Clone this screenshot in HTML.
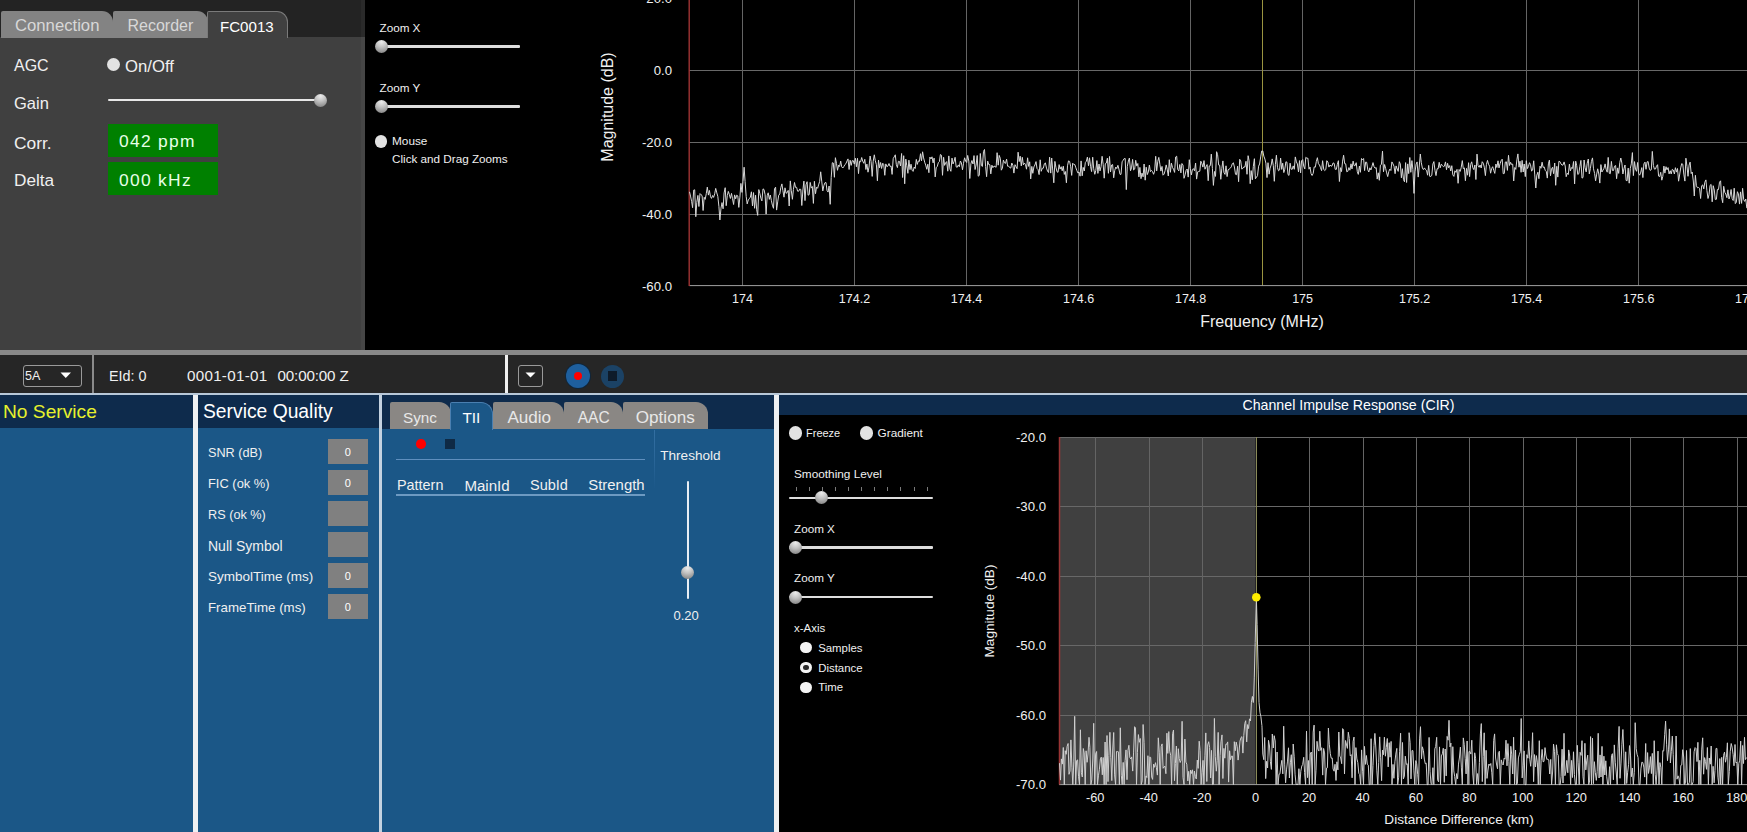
<!DOCTYPE html>
<html><head><meta charset="utf-8">
<style>
*{margin:0;padding:0;box-sizing:border-box}
html,body{width:1747px;height:832px;overflow:hidden;background:#000;font-family:"Liberation Sans",sans-serif;color:#f0f0f0}
.a{position:absolute;white-space:nowrap;line-height:1}
.r{position:absolute}
.tab{position:absolute;border-radius:2px 11px 0 0}
.thumb{position:absolute;border-radius:50%;background:radial-gradient(circle at 50% 15%,#ececec 0%,#c4c4c4 40%,#8a8a8a 85%,#6a6a6a 100%)}
.track{position:absolute;background:#d8d8d8;border-radius:1px}
.radio{position:absolute;border-radius:50%;background:#e2e2e2}
.ch{font-family:"Liberation Sans",sans-serif;fill:#f0f0f0}
</style></head><body>
<div class="r" style="left:0px;top:0px;width:365px;height:37px;background:#232323;"></div>
<div class="r" style="left:0px;top:37px;width:365px;height:313px;background:#404040;"></div>
<div class="r" style="left:361px;top:0px;width:4px;height:350px;background:rgba(255,255,255,0.035);"></div>
<div class="tab" style="left:1px;top:11px;width:112px;height:27px;background:#838383"></div>
<div class="a" style="left:15.0px;top:17.6px;font-size:16.7px;color:#d8d8d8;">Connection</div>
<div class="tab" style="left:113px;top:11px;width:95px;height:27px;background:#838383"></div>
<div class="a" style="left:127.5px;top:18.2px;font-size:16px;color:#d8d8d8;">Recorder</div>
<div class="tab" style="left:207px;top:11px;width:81px;height:27px;background:#404040;border:1px solid #7a7a7a;border-bottom:none"></div>
<div class="a" style="left:220.0px;top:18.9px;font-size:15.1px;color:#ffffff;">FC0013</div>
<div class="a" style="left:14.0px;top:57.8px;font-size:16px;color:#f0f0f0;">AGC</div>
<div class="radio" style="left:107.1px;top:57.89999999999999px;width:13.4px;height:13.4px;background:#e2e2e2;"></div>
<div class="a" style="left:125.0px;top:58.7px;font-size:16.7px;color:#f0f0f0;">On/Off</div>
<div class="a" style="left:14.0px;top:95.0px;font-size:16.5px;color:#f0f0f0;">Gain</div>
<div class="track" style="left:108px;top:98.75px;width:212px;height:2.5px;background:#e8e8e8"></div>
<div class="thumb" style="left:314.0px;top:93.5px;width:13.0px;height:13.0px"></div>
<div class="a" style="left:14.0px;top:134.5px;font-size:17.4px;color:#f0f0f0;">Corr.</div>
<div class="r" style="left:108px;top:124px;width:110px;height:33px;background:#008000;"></div>
<div class="a" style="left:119.0px;top:133.2px;font-size:17.4px;color:#e8ffe8;letter-spacing:1.3px">042&nbsp;ppm</div>
<div class="a" style="left:14.0px;top:172.1px;font-size:17.2px;color:#f0f0f0;">Delta</div>
<div class="r" style="left:108px;top:162px;width:110px;height:33px;background:#008000;"></div>
<div class="a" style="left:119.0px;top:172.0px;font-size:17.4px;color:#e8ffe8;letter-spacing:1.3px">000&nbsp;kHz</div>
<div class="a" style="left:379.5px;top:22.1px;font-size:11.7px;color:#f0f0f0;">Zoom X</div>
<div class="track" style="left:380px;top:45.3px;width:139.5px;height:2.4px;background:#dedede"></div>
<div class="thumb" style="left:375.0px;top:40.0px;width:13.0px;height:13.0px"></div>
<div class="a" style="left:379.5px;top:81.7px;font-size:11.7px;color:#f0f0f0;">Zoom Y</div>
<div class="track" style="left:380px;top:105.2px;width:139.5px;height:2.4px;background:#dedede"></div>
<div class="thumb" style="left:375.1px;top:99.9px;width:13.0px;height:13.0px"></div>
<div class="radio" style="left:374.9px;top:135.2px;width:12.6px;height:12.6px;background:#e2e2e2;"></div>
<div class="a" style="left:392.0px;top:136.3px;font-size:11.8px;color:#f0f0f0;">Mouse</div>
<div class="a" style="left:392.0px;top:152.7px;font-size:11.7px;color:#f0f0f0;">Click and Drag Zooms</div>
<div class="r" style="left:0px;top:350px;width:1747px;height:5px;background:#898989;"></div>
<div class="r" style="left:0px;top:355px;width:1747px;height:38px;background:#262626;"></div>
<div class="r" style="left:23px;top:365px;width:59px;height:22px;border:1px solid #9a9a9a;border-radius:3px"></div>
<div class="a" style="left:25.0px;top:370.4px;font-size:12.5px;color:#f0f0f0;">5A</div>
<svg class="r" style="left:60px;top:372px" width="12" height="7"><path d="M0.5 0.5 L11 0.5 L5.75 6 Z" fill="#ffffff"/></svg>
<div class="r" style="left:92px;top:355px;width:2px;height:38px;background:#8a8a8a;"></div>
<div class="a" style="left:109.0px;top:368.8px;font-size:14.4px;color:#f0f0f0;">EId: 0</div>
<div class="a" style="left:187.0px;top:368.1px;font-size:15.2px;color:#f0f0f0;letter-spacing:0.27px">0001-01-01</div>
<div class="a" style="left:277.5px;top:368.1px;font-size:15.2px;color:#f0f0f0;letter-spacing:-0.15px">00:00:00 Z</div>
<div class="r" style="left:505px;top:355px;width:3px;height:39px;background:#f0f0f0;"></div>
<div class="r" style="left:518px;top:365px;width:25px;height:22px;border:1px solid #9a9a9a;border-radius:3px"></div>
<svg class="r" style="left:525px;top:372px" width="12" height="7"><path d="M0.5 0.5 L10.5 0.5 L5.5 5.5 Z" fill="#ffffff"/></svg>
<div class="r" style="left:566px;top:364px;width:24px;height:24px;border-radius:50%;background:#1e5f9e;box-shadow:0 0 0 1px #10263a"></div>
<div class="r" style="left:573.5px;top:371.7px;width:8.6px;height:8.6px;border-radius:50%;background:#ff0000"></div>
<div class="r" style="left:601px;top:364.5px;width:23px;height:23px;border-radius:50%;background:#1b4265"></div>
<div class="r" style="left:608px;top:371px;width:9px;height:10px;background:#0e1b2a;"></div>
<div class="r" style="left:0px;top:393px;width:1747px;height:2px;background:#b8c8d8;"></div>
<div class="r" style="left:0px;top:395px;width:193px;height:33px;background:#0e2b4c;"></div>
<div class="r" style="left:0px;top:428px;width:193px;height:404px;background:#1b5787;"></div>
<div class="a" style="left:3.0px;top:401.7px;font-size:19.2px;color:#e6f02c;">No Service</div>
<div class="r" style="left:193px;top:395px;width:5px;height:437px;background:#eef0f2;"></div>
<div class="r" style="left:198px;top:395px;width:181px;height:33px;background:#0e2b4c;"></div>
<div class="r" style="left:198px;top:428px;width:181px;height:404px;background:#1b5787;"></div>
<div class="a" style="left:203.0px;top:401.7px;font-size:19.3px;color:#ffffff;">Service Quality</div>
<div class="a" style="left:208.0px;top:446.9px;font-size:12.7px;color:#f0f0f0;">SNR (dB)</div>
<div class="r" style="left:328px;top:439px;width:40px;height:25px;background:#808080;"></div>
<div class="a" style="left:-152.3px;width:1000px;text-align:center;top:447.2px;font-size:11px;color:#ffffff;">0</div>
<div class="a" style="left:208.0px;top:477.8px;font-size:12.9px;color:#f0f0f0;">FIC (ok %)</div>
<div class="r" style="left:328px;top:470px;width:40px;height:25px;background:#808080;"></div>
<div class="a" style="left:-152.3px;width:1000px;text-align:center;top:478.2px;font-size:11px;color:#ffffff;">0</div>
<div class="a" style="left:208.0px;top:508.9px;font-size:12.7px;color:#f0f0f0;">RS (ok %)</div>
<div class="r" style="left:328px;top:501px;width:40px;height:25px;background:#808080;"></div>
<div class="a" style="left:208.0px;top:538.8px;font-size:14.0px;color:#f0f0f0;">Null Symbol</div>
<div class="r" style="left:328px;top:532px;width:40px;height:25px;background:#808080;"></div>
<div class="a" style="left:208.0px;top:570.3px;font-size:13.5px;color:#f0f0f0;">SymbolTime (ms)</div>
<div class="r" style="left:328px;top:563px;width:40px;height:25px;background:#808080;"></div>
<div class="a" style="left:-152.3px;width:1000px;text-align:center;top:571.2px;font-size:11px;color:#ffffff;">0</div>
<div class="a" style="left:208.0px;top:601.4px;font-size:13.3px;color:#f0f0f0;">FrameTime (ms)</div>
<div class="r" style="left:328px;top:594px;width:40px;height:25px;background:#808080;"></div>
<div class="a" style="left:-152.3px;width:1000px;text-align:center;top:602.2px;font-size:11px;color:#ffffff;">0</div>
<div class="r" style="left:379px;top:395px;width:3px;height:437px;background:#c4d2e0;"></div>
<div class="r" style="left:382px;top:395px;width:392px;height:34px;background:#0e2b4c;"></div>
<div class="r" style="left:382px;top:429px;width:392px;height:403px;background:#1b5787;"></div>
<div class="tab" style="left:390px;top:402px;width:61px;height:27px;background:#8a8784;border-radius:2px 12px 0 0"></div>
<div class="a" style="left:403.0px;top:410.0px;font-size:15.3px;color:#e8e8e8;">Sync</div>
<div class="tab" style="left:493px;top:402px;width:71px;height:27px;background:#8a8784;border-radius:2px 12px 0 0"></div>
<div class="a" style="left:507.4px;top:408.5px;font-size:17.1px;color:#e8e8e8;">Audio</div>
<div class="tab" style="left:564px;top:402px;width:59px;height:27px;background:#8a8784;border-radius:2px 12px 0 0"></div>
<div class="a" style="left:577.7px;top:409.8px;font-size:15.6px;color:#e8e8e8;">AAC</div>
<div class="tab" style="left:623px;top:402px;width:85px;height:27px;background:#8a8784;border-radius:2px 12px 0 0"></div>
<div class="a" style="left:635.8px;top:408.5px;font-size:17.1px;color:#e8e8e8;">Options</div>
<div class="tab" style="left:450px;top:402px;width:43px;height:28px;background:#1b5787;border:1px solid #4a7fb0;border-bottom:none;border-radius:2px 12px 0 0"></div>
<div class="a" style="left:462.4px;top:410.0px;font-size:15.4px;color:#ffffff;">TII</div>
<div class="radio" style="left:416.3px;top:439.3px;width:9.4px;height:9.4px;background:#ff0000;"></div>
<div class="r" style="left:445px;top:439px;width:10px;height:10px;background:#0f2a45;"></div>
<div class="r" style="left:396px;top:458.5px;width:249px;height:1.5px;background:#5f8fbe;"></div>
<div class="r" style="left:654px;top:430px;width:1px;height:60px;background:linear-gradient(#336fa2,#2a6698 50%,#1b5787)"></div>
<div class="a" style="left:660.2px;top:449.2px;font-size:13.6px;color:#f0f0f0;">Threshold</div>
<div class="a" style="left:397.0px;top:478.2px;font-size:14.4px;color:#f0f0f0;">Pattern</div>
<div class="a" style="left:464.4px;top:477.6px;font-size:15.1px;color:#f0f0f0;">MainId</div>
<div class="a" style="left:530.0px;top:478.1px;font-size:14.5px;color:#f0f0f0;">SubId</div>
<div class="a" style="left:588.3px;top:477.8px;font-size:14.9px;color:#f0f0f0;">Strength</div>
<div class="r" style="left:396px;top:494px;width:249px;height:1.5px;background:#6d9ac2;"></div>
<div class="track" style="left:686.5px;top:480.5px;width:2.2px;height:118px;background:#e8eef4"></div>
<div class="thumb" style="left:681.1px;top:566.0px;width:13.0px;height:13.0px"></div>
<div class="a" style="left:186.1px;width:1000px;text-align:center;top:608.7px;font-size:13px;color:#f0f0f0;">0.20</div>
<div class="r" style="left:774px;top:395px;width:5px;height:437px;background:#eef0f2;"></div>
<div class="r" style="left:779px;top:395px;width:968px;height:20px;background:#0e2b4c;"></div>
<div class="r" style="left:779px;top:415px;width:968px;height:417px;background:#000000;"></div>
<div class="a" style="left:848.5px;width:1000px;text-align:center;top:398.0px;font-size:14.2px;color:#ffffff;">Channel Impulse Response (CIR)</div>
<div class="radio" style="left:788.6999999999999px;top:426.4px;width:13.2px;height:13.2px;background:#e2e2e2;"></div>
<div class="a" style="left:806.0px;top:428.4px;font-size:11px;color:#f0f0f0;">Freeze</div>
<div class="radio" style="left:860.0px;top:426.4px;width:13.2px;height:13.2px;background:#e2e2e2;"></div>
<div class="a" style="left:877.6px;top:427.7px;font-size:11.8px;color:#f0f0f0;">Gradient</div>
<div class="a" style="left:794.0px;top:468.6px;font-size:11.8px;color:#f0f0f0;">Smoothing Level</div>
<div class="r" style="left:795.5px;top:487px;width:1px;height:3.6px;background:#7a7a7a;"></div>
<div class="r" style="left:808.62px;top:487px;width:1px;height:3.6px;background:#7a7a7a;"></div>
<div class="r" style="left:821.74px;top:487px;width:1px;height:3.6px;background:#7a7a7a;"></div>
<div class="r" style="left:834.86px;top:487px;width:1px;height:3.6px;background:#7a7a7a;"></div>
<div class="r" style="left:847.98px;top:487px;width:1px;height:3.6px;background:#7a7a7a;"></div>
<div class="r" style="left:861.1px;top:487px;width:1px;height:3.6px;background:#7a7a7a;"></div>
<div class="r" style="left:874.22px;top:487px;width:1px;height:3.6px;background:#7a7a7a;"></div>
<div class="r" style="left:887.34px;top:487px;width:1px;height:3.6px;background:#7a7a7a;"></div>
<div class="r" style="left:900.46px;top:487px;width:1px;height:3.6px;background:#7a7a7a;"></div>
<div class="r" style="left:913.58px;top:487px;width:1px;height:3.6px;background:#7a7a7a;"></div>
<div class="r" style="left:926.7px;top:487px;width:1px;height:3.6px;background:#7a7a7a;"></div>
<div class="track" style="left:789px;top:496.6px;width:144.29999999999995px;height:2.4px;background:#dedede"></div>
<div class="thumb" style="left:815.3px;top:491.3px;width:13.0px;height:13.0px"></div>
<div class="a" style="left:794.0px;top:522.7px;font-size:11.7px;color:#f0f0f0;">Zoom X</div>
<div class="track" style="left:789px;top:546.1999999999999px;width:144.29999999999995px;height:2.4px;background:#dedede"></div>
<div class="thumb" style="left:789.2px;top:540.9px;width:13.0px;height:13.0px"></div>
<div class="a" style="left:794.0px;top:572.4px;font-size:11.7px;color:#f0f0f0;">Zoom Y</div>
<div class="track" style="left:789px;top:595.8px;width:144.29999999999995px;height:2.4px;background:#dedede"></div>
<div class="thumb" style="left:789.3px;top:590.5px;width:13.0px;height:13.0px"></div>
<div class="a" style="left:794.0px;top:622.9px;font-size:11.5px;color:#f0f0f0;">x-Axis</div>
<div class="radio" style="left:800.4px;top:642.1px;width:11.2px;height:11.2px;background:#f4f4f4;"></div>
<div class="a" style="left:818.2px;top:642.6px;font-size:11.4px;color:#f0f0f0;">Samples</div>
<div class="radio" style="left:800.4px;top:662.0px;width:11.2px;height:11.2px;background:#f4f4f4;"></div>
<div class="radio" style="left:803.4px;top:665.0px;width:5.2px;height:5.2px;background:#2a2a2a;"></div>
<div class="a" style="left:818.2px;top:662.5px;font-size:11.4px;color:#f0f0f0;">Distance</div>
<div class="radio" style="left:800.4px;top:681.9px;width:11.2px;height:11.2px;background:#f4f4f4;"></div>
<div class="a" style="left:818.2px;top:682.4px;font-size:11.4px;color:#f0f0f0;">Time</div>
<svg class="r" style="left:0;top:0" width="1747" height="832">
<line x1="689" y1="-1.5" x2="1747" y2="-1.5" stroke="#686868" stroke-width="1"/>
<line x1="689" y1="70.5" x2="1747" y2="70.5" stroke="#686868" stroke-width="1"/>
<line x1="689" y1="142.5" x2="1747" y2="142.5" stroke="#686868" stroke-width="1"/>
<line x1="689" y1="214.5" x2="1747" y2="214.5" stroke="#686868" stroke-width="1"/>
<line x1="742.5" y1="0" x2="742.5" y2="286" stroke="#646464" stroke-width="1"/>
<line x1="854.5" y1="0" x2="854.5" y2="286" stroke="#646464" stroke-width="1"/>
<line x1="966.5" y1="0" x2="966.5" y2="286" stroke="#646464" stroke-width="1"/>
<line x1="1078.5" y1="0" x2="1078.5" y2="286" stroke="#646464" stroke-width="1"/>
<line x1="1190.5" y1="0" x2="1190.5" y2="286" stroke="#646464" stroke-width="1"/>
<line x1="1302.5" y1="0" x2="1302.5" y2="286" stroke="#646464" stroke-width="1"/>
<line x1="1414.5" y1="0" x2="1414.5" y2="286" stroke="#646464" stroke-width="1"/>
<line x1="1526.5" y1="0" x2="1526.5" y2="286" stroke="#646464" stroke-width="1"/>
<line x1="1638.5" y1="0" x2="1638.5" y2="286" stroke="#646464" stroke-width="1"/>
<line x1="1750.5" y1="0" x2="1750.5" y2="286" stroke="#646464" stroke-width="1"/>
<line x1="1262.5" y1="0" x2="1262.5" y2="286" stroke="#9a9440" stroke-width="1"/>
<line x1="689" y1="285.6" x2="1747" y2="285.6" stroke="#a0a0a0" stroke-width="1"/>
<line x1="689.2" y1="0" x2="689.2" y2="286" stroke="#a03434" stroke-width="1.4"/>
<polyline fill="none" stroke="#d8d8d8" stroke-width="1" stroke-linejoin="round" points="689.5,191.8 690.5,196.1 691.6,201.3 692.6,207.7 693.7,190.1 694.7,189.8 695.8,216.7 696.8,202.4 697.9,195.4 698.9,206.5 700.0,193.6 701.0,194.7 702.1,195.6 703.1,210.5 704.2,197.3 705.2,199.4 706.3,193.5 707.3,187.1 708.4,195.1 709.4,190.4 710.5,196.6 711.5,198.4 712.6,195.5 713.6,197.4 714.7,193.8 715.7,188.4 716.8,192.9 717.8,196.3 718.9,206.3 719.9,220.0 721.0,208.1 722.0,202.6 723.1,208.8 724.1,192.9 725.2,187.7 726.2,205.7 727.3,195.6 728.3,191.4 729.4,194.7 730.4,198.5 731.5,193.4 732.5,198.7 733.6,204.5 734.6,194.9 735.7,198.8 736.7,195.2 737.8,195.9 738.8,207.4 739.9,197.2 740.9,183.4 742.0,192.4 743.0,181.6 744.1,167.2 745.1,181.6 746.2,196.5 747.2,203.9 748.3,199.9 749.3,198.7 750.4,197.1 751.4,191.8 752.5,206.0 753.5,192.6 754.6,208.3 755.6,195.2 756.7,209.8 757.7,215.4 758.8,189.6 759.8,193.3 760.9,198.3 761.9,200.9 763.0,188.9 764.0,189.5 765.1,194.8 766.1,214.1 767.2,195.7 768.2,192.8 769.3,199.4 770.3,195.0 771.4,200.7 772.4,205.2 773.5,208.3 774.5,188.7 775.6,187.2 776.6,210.1 777.7,201.9 778.7,195.2 779.8,194.0 780.8,187.6 781.9,183.9 782.9,190.6 784.0,197.2 785.0,187.8 786.1,193.3 787.1,192.7 788.2,190.4 789.2,206.0 790.3,180.9 791.3,190.6 792.4,199.3 793.4,189.5 794.5,182.5 795.5,187.4 796.6,187.3 797.6,191.2 798.7,191.2 799.7,189.1 800.8,189.4 801.8,205.5 802.9,190.0 803.9,181.1 805.0,200.6 806.0,184.8 807.1,181.7 808.1,195.2 809.2,194.6 810.2,182.4 811.3,188.1 812.3,186.5 813.4,203.4 814.4,181.3 815.5,193.7 816.5,187.2 817.6,188.3 818.6,184.9 819.7,181.3 820.7,171.8 821.8,181.9 822.8,190.9 823.9,185.5 824.9,182.8 826.0,182.5 827.0,190.5 828.1,192.1 829.1,186.0 830.2,204.3 831.2,177.7 832.3,162.7 833.3,163.0 834.4,177.3 835.4,157.7 836.5,163.5 837.5,170.3 838.6,165.1 839.6,166.5 840.7,161.1 841.7,166.8 842.8,168.0 843.8,166.6 844.9,164.6 845.9,163.7 847.0,161.0 848.0,158.9 849.1,169.5 850.1,160.2 851.2,165.4 852.2,160.7 853.3,160.7 854.3,164.1 855.4,158.2 856.4,166.8 857.5,158.3 858.5,173.6 859.6,161.1 860.6,161.9 861.7,157.5 862.7,161.2 863.8,163.3 864.8,159.3 865.9,169.5 866.9,164.1 868.0,172.2 869.0,167.1 870.1,156.0 871.1,161.4 872.2,176.4 873.2,161.2 874.3,154.8 875.3,160.7 876.4,164.7 877.4,180.8 878.5,160.1 879.5,167.9 880.6,162.5 881.6,168.5 882.7,163.2 883.7,164.2 884.8,175.3 885.8,163.9 886.9,166.7 887.9,166.1 889.0,163.5 890.0,166.4 891.1,166.1 892.1,174.4 893.2,158.6 894.2,156.9 895.3,154.8 896.3,164.4 897.4,167.6 898.4,161.3 899.5,161.5 900.5,166.0 901.6,153.5 902.6,177.5 903.7,155.7 904.7,183.8 905.8,159.1 906.8,165.7 907.9,173.3 908.9,160.2 910.0,169.6 911.0,164.2 912.1,170.2 913.1,171.4 914.2,167.0 915.2,168.5 916.3,159.4 917.3,164.4 918.4,160.9 919.4,161.4 920.5,153.7 921.5,160.9 922.6,151.8 923.6,157.9 924.7,162.3 925.7,165.1 926.8,169.3 927.8,164.2 928.9,172.7 929.9,157.1 931.0,159.0 932.0,156.8 933.1,162.9 934.1,158.1 935.2,176.9 936.2,167.7 937.3,166.4 938.3,162.7 939.4,161.6 940.4,154.5 941.5,155.3 942.5,175.3 943.6,157.3 944.6,165.4 945.7,162.7 946.7,161.6 947.8,171.2 948.8,155.9 949.9,168.9 950.9,171.3 952.0,158.1 953.0,164.0 954.1,161.4 955.1,157.3 956.2,166.9 957.2,167.3 958.3,164.9 959.3,166.8 960.4,161.0 961.4,162.8 962.5,169.8 963.5,163.3 964.6,157.8 965.6,161.0 966.7,162.5 967.7,155.4 968.8,161.1 969.8,178.5 970.9,163.8 971.9,160.5 973.0,164.0 974.0,155.6 975.1,169.5 976.1,165.0 977.2,155.5 978.2,176.2 979.3,175.4 980.3,153.5 981.4,165.6 982.4,166.5 983.5,151.4 984.5,149.5 985.6,166.5 986.6,176.7 987.7,161.1 988.7,164.5 989.8,164.6 990.8,173.9 991.9,165.2 992.9,167.7 994.0,166.1 995.0,166.5 996.1,167.3 997.1,152.7 998.2,165.2 999.2,155.4 1000.3,158.3 1001.3,170.2 1002.4,168.1 1003.4,160.1 1004.5,162.9 1005.5,163.4 1006.6,159.1 1007.6,166.2 1008.7,166.1 1009.7,167.6 1010.8,168.1 1011.8,163.0 1012.9,165.5 1013.9,173.1 1015.0,164.7 1016.0,166.7 1017.1,168.7 1018.1,152.2 1019.2,161.6 1020.2,156.2 1021.3,165.9 1022.3,157.3 1023.4,164.9 1024.4,163.0 1025.5,164.6 1026.5,169.2 1027.6,157.8 1028.6,166.4 1029.7,161.8 1030.7,178.9 1031.8,166.4 1032.8,173.3 1033.9,166.9 1034.9,165.0 1036.0,161.6 1037.0,168.5 1038.1,169.6 1039.1,174.6 1040.2,159.8 1041.2,171.3 1042.3,168.3 1043.3,168.2 1044.4,163.7 1045.4,162.9 1046.5,168.1 1047.5,171.0 1048.6,172.5 1049.6,157.2 1050.7,173.1 1051.7,158.0 1052.8,170.9 1053.8,182.8 1054.9,161.4 1055.9,167.3 1057.0,171.8 1058.0,172.3 1059.1,164.6 1060.1,169.1 1061.2,166.7 1062.2,170.8 1063.3,166.2 1064.3,174.4 1065.4,171.5 1066.4,182.8 1067.5,165.8 1068.5,160.9 1069.6,161.4 1070.6,166.2 1071.7,175.4 1072.7,163.2 1073.8,164.5 1074.8,164.6 1075.9,167.8 1076.9,170.7 1078.0,173.1 1079.0,172.0 1080.1,176.2 1081.1,160.9 1082.2,175.8 1083.2,167.4 1084.3,171.0 1085.3,162.6 1086.4,161.2 1087.4,157.1 1088.5,165.8 1089.5,157.8 1090.6,166.7 1091.6,171.6 1092.7,157.2 1093.7,168.8 1094.8,174.3 1095.8,170.5 1096.9,160.6 1097.9,173.4 1099.0,164.0 1100.0,170.9 1101.1,166.5 1102.1,156.3 1103.2,164.6 1104.2,178.2 1105.3,163.7 1106.3,163.1 1107.4,158.1 1108.4,173.3 1109.5,156.5 1110.5,172.0 1111.6,165.0 1112.6,164.5 1113.7,177.8 1114.7,170.5 1115.8,167.0 1116.8,168.6 1117.9,165.3 1118.9,169.0 1120.0,174.3 1121.0,174.4 1122.1,161.8 1123.1,160.3 1124.2,158.6 1125.2,158.5 1126.3,189.6 1127.3,166.4 1128.4,161.0 1129.4,158.0 1130.5,170.8 1131.5,167.9 1132.6,159.4 1133.6,170.0 1134.7,169.1 1135.7,160.3 1136.8,166.1 1137.8,163.5 1138.9,176.9 1139.9,167.4 1141.0,178.7 1142.0,173.1 1143.1,176.8 1144.1,164.0 1145.2,180.2 1146.2,167.2 1147.3,174.6 1148.3,172.0 1149.4,165.0 1150.4,171.7 1151.5,170.4 1152.5,171.6 1153.6,174.3 1154.6,171.1 1155.7,156.3 1156.7,170.9 1157.8,161.3 1158.8,157.4 1159.9,164.3 1160.9,171.1 1162.0,166.4 1163.0,175.2 1164.1,174.1 1165.1,170.7 1166.2,164.9 1167.2,169.2 1168.3,176.0 1169.3,159.7 1170.4,172.3 1171.4,163.2 1172.5,167.5 1173.5,169.2 1174.6,172.4 1175.6,157.0 1176.7,156.2 1177.7,169.4 1178.8,170.9 1179.8,164.5 1180.9,172.9 1181.9,163.5 1183.0,165.1 1184.0,178.3 1185.1,174.9 1186.1,170.4 1187.2,169.0 1188.2,177.1 1189.3,159.7 1190.3,168.6 1191.4,174.9 1192.4,169.4 1193.5,168.7 1194.5,170.8 1195.6,163.1 1196.6,179.1 1197.7,171.8 1198.7,171.5 1199.8,171.2 1200.8,161.2 1201.9,163.7 1202.9,167.1 1204.0,160.6 1205.0,169.2 1206.1,166.6 1207.1,164.6 1208.2,180.7 1209.2,166.0 1210.3,165.7 1211.3,154.1 1212.4,168.4 1213.4,185.4 1214.5,171.5 1215.5,176.4 1216.6,151.7 1217.6,154.7 1218.7,165.1 1219.7,165.3 1220.8,179.3 1221.8,168.7 1222.9,160.9 1223.9,172.5 1225.0,174.4 1226.0,165.8 1227.1,176.6 1228.1,169.8 1229.2,169.1 1230.2,168.3 1231.3,166.8 1232.3,163.7 1233.4,162.8 1234.4,167.0 1235.5,174.3 1236.5,174.7 1237.6,166.2 1238.6,181.7 1239.7,159.3 1240.7,160.9 1241.8,169.1 1242.8,168.4 1243.9,166.8 1244.9,167.1 1246.0,161.3 1247.0,174.3 1248.1,155.7 1249.1,160.8 1250.2,183.7 1251.2,170.6 1252.3,179.8 1253.3,166.6 1254.4,158.7 1255.4,178.8 1256.5,177.2 1257.5,175.7 1258.6,166.2 1259.6,164.0 1260.7,156.9 1261.7,151.0 1262.8,151.0 1263.8,156.1 1264.9,159.1 1265.9,163.2 1267.0,177.6 1268.0,162.7 1269.1,174.2 1270.1,168.1 1271.2,165.0 1272.2,158.9 1273.3,165.4 1274.3,181.3 1275.4,164.3 1276.4,155.2 1277.5,167.7 1278.5,170.8 1279.6,169.9 1280.6,158.1 1281.7,169.4 1282.7,163.2 1283.8,172.6 1284.8,169.3 1285.9,161.8 1286.9,162.1 1288.0,174.6 1289.0,175.4 1290.1,163.2 1291.1,169.2 1292.2,169.3 1293.2,165.9 1294.3,169.3 1295.3,156.9 1296.4,161.9 1297.4,164.0 1298.5,171.9 1299.5,160.6 1300.6,172.9 1301.6,160.7 1302.7,159.6 1303.7,166.1 1304.8,168.9 1305.8,157.3 1306.9,158.3 1307.9,158.2 1309.0,169.2 1310.0,167.0 1311.1,173.8 1312.1,175.5 1313.2,173.3 1314.2,166.9 1315.3,167.2 1316.3,161.6 1317.4,157.7 1318.4,163.7 1319.5,165.0 1320.5,167.7 1321.6,170.7 1322.6,160.7 1323.7,169.1 1324.7,170.6 1325.8,169.5 1326.8,160.7 1327.9,162.0 1328.9,167.1 1330.0,165.0 1331.0,166.2 1332.1,165.8 1333.1,162.9 1334.2,163.4 1335.2,169.3 1336.3,169.4 1337.3,164.5 1338.4,160.7 1339.4,181.5 1340.5,167.7 1341.5,171.6 1342.6,161.1 1343.6,155.2 1344.7,163.7 1345.7,163.8 1346.8,171.8 1347.8,171.3 1348.9,167.6 1349.9,170.2 1351.0,163.8 1352.0,168.9 1353.1,161.1 1354.1,165.7 1355.2,165.5 1356.2,162.7 1357.3,171.6 1358.3,174.4 1359.4,166.0 1360.4,172.3 1361.5,158.5 1362.5,159.8 1363.6,158.5 1364.6,170.6 1365.7,162.0 1366.7,162.3 1367.8,169.8 1368.8,172.0 1369.9,167.8 1370.9,170.0 1372.0,166.2 1373.0,162.6 1374.1,166.9 1375.1,168.2 1376.2,167.6 1377.2,179.1 1378.3,172.8 1379.3,180.3 1380.4,165.2 1381.4,164.5 1382.5,151.1 1383.5,171.8 1384.6,164.5 1385.6,168.3 1386.7,172.9 1387.7,176.6 1388.8,171.5 1389.8,169.1 1390.9,170.5 1391.9,161.9 1393.0,163.9 1394.0,166.3 1395.1,173.7 1396.1,165.9 1397.2,169.0 1398.2,171.4 1399.3,161.7 1400.3,163.9 1401.4,177.8 1402.4,168.7 1403.5,179.5 1404.5,181.8 1405.6,162.6 1406.6,182.5 1407.7,163.9 1408.7,173.6 1409.8,157.5 1410.8,172.3 1411.9,160.6 1412.9,169.5 1414.0,193.4 1415.0,171.9 1416.1,164.1 1417.1,161.9 1418.2,177.1 1419.2,167.1 1420.3,154.0 1421.3,162.7 1422.4,168.1 1423.4,169.6 1424.5,167.9 1425.5,169.7 1426.6,170.6 1427.6,175.2 1428.7,165.4 1429.7,176.3 1430.8,176.5 1431.8,175.2 1432.9,164.0 1433.9,161.6 1435.0,170.6 1436.0,175.6 1437.1,168.7 1438.1,168.9 1439.2,162.3 1440.2,167.8 1441.3,164.2 1442.3,165.4 1443.4,166.7 1444.4,166.2 1445.5,161.9 1446.5,169.7 1447.6,163.3 1448.6,167.8 1449.7,165.6 1450.7,171.0 1451.8,165.7 1452.8,174.8 1453.9,176.4 1454.9,170.8 1456.0,172.4 1457.0,169.4 1458.1,183.3 1459.1,169.5 1460.2,171.4 1461.2,167.6 1462.3,160.6 1463.3,168.7 1464.4,167.9 1465.4,180.7 1466.5,168.4 1467.5,175.2 1468.6,162.7 1469.6,176.6 1470.7,164.5 1471.7,161.8 1472.8,167.7 1473.8,169.6 1474.9,165.0 1475.9,179.5 1477.0,154.1 1478.0,165.4 1479.1,167.3 1480.1,165.0 1481.2,168.0 1482.2,161.7 1483.3,163.2 1484.3,167.2 1485.4,175.6 1486.4,164.6 1487.5,160.4 1488.5,164.2 1489.6,166.2 1490.6,173.2 1491.7,168.4 1492.7,166.7 1493.8,170.5 1494.8,173.4 1495.9,164.0 1496.9,167.5 1498.0,160.8 1499.0,167.9 1500.1,163.7 1501.1,160.7 1502.2,159.2 1503.2,173.7 1504.3,173.4 1505.3,162.1 1506.4,161.8 1507.4,170.4 1508.5,155.3 1509.5,165.5 1510.6,162.3 1511.6,164.6 1512.7,164.1 1513.7,181.0 1514.8,167.5 1515.8,169.4 1516.9,159.8 1517.9,153.9 1519.0,167.2 1520.0,161.2 1521.1,172.3 1522.1,160.4 1523.2,172.0 1524.2,164.0 1525.3,176.6 1526.3,160.7 1527.4,168.6 1528.4,166.5 1529.5,162.7 1530.5,164.7 1531.6,171.1 1532.6,170.2 1533.7,160.8 1534.7,174.1 1535.8,188.0 1536.8,175.2 1537.9,172.2 1538.9,178.7 1540.0,166.2 1541.0,168.3 1542.1,162.2 1543.1,167.4 1544.2,166.9 1545.2,170.3 1546.3,171.5 1547.3,178.1 1548.4,163.8 1549.4,160.1 1550.5,175.8 1551.5,169.1 1552.6,167.2 1553.6,173.7 1554.7,163.0 1555.7,185.3 1556.8,166.3 1557.8,177.1 1558.9,161.3 1559.9,161.6 1561.0,163.9 1562.0,165.2 1563.1,164.9 1564.1,161.9 1565.2,166.0 1566.2,176.7 1567.3,173.1 1568.3,174.5 1569.4,164.1 1570.4,170.9 1571.5,167.6 1572.5,168.4 1573.6,161.5 1574.6,183.9 1575.7,161.2 1576.7,165.7 1577.8,174.5 1578.8,173.7 1579.9,166.3 1580.9,160.4 1582.0,178.1 1583.0,177.5 1584.1,160.0 1585.1,167.8 1586.2,171.9 1587.2,163.2 1588.3,159.0 1589.3,173.9 1590.4,168.5 1591.4,161.6 1592.5,157.9 1593.5,168.8 1594.6,173.5 1595.6,180.8 1596.7,174.1 1597.7,168.8 1598.8,174.0 1599.8,183.1 1600.9,164.6 1601.9,172.0 1603.0,170.1 1604.0,168.3 1605.1,163.9 1606.1,169.2 1607.2,172.2 1608.2,157.4 1609.3,173.3 1610.3,173.7 1611.4,161.4 1612.4,170.4 1613.5,170.5 1614.5,166.2 1615.6,165.5 1616.6,178.7 1617.7,167.9 1618.7,173.4 1619.8,162.5 1620.8,158.0 1621.9,163.1 1622.9,174.0 1624.0,168.4 1625.0,165.0 1626.1,180.4 1627.1,180.8 1628.2,168.1 1629.2,183.2 1630.3,168.3 1631.3,163.9 1632.4,152.6 1633.4,175.6 1634.5,161.6 1635.5,169.1 1636.6,171.3 1637.6,162.5 1638.7,173.7 1639.7,175.2 1640.8,172.1 1641.8,167.6 1642.9,177.6 1643.9,163.9 1645.0,162.1 1646.0,169.3 1647.1,161.9 1648.1,161.5 1649.2,168.1 1650.2,170.4 1651.3,169.7 1652.3,151.4 1653.4,165.5 1654.4,169.1 1655.5,169.0 1656.5,166.2 1657.6,164.7 1658.6,176.1 1659.7,176.6 1660.7,172.3 1661.8,180.2 1662.8,176.4 1663.9,166.1 1664.9,173.1 1666.0,166.7 1667.0,169.8 1668.1,167.6 1669.1,173.9 1670.2,170.7 1671.2,174.0 1672.3,169.3 1673.3,170.0 1674.4,174.0 1675.4,167.7 1676.5,172.1 1677.5,168.5 1678.6,181.2 1679.6,175.0 1680.7,167.9 1681.7,163.6 1682.8,164.3 1683.8,174.1 1684.9,181.1 1685.9,158.2 1687.0,166.6 1688.0,176.3 1689.1,165.1 1690.1,162.1 1691.2,173.6 1692.2,172.0 1693.3,181.0 1694.3,196.0 1695.4,175.3 1696.4,185.8 1697.5,187.8 1698.5,187.5 1699.6,188.4 1700.6,198.5 1701.7,185.7 1702.7,184.9 1703.8,188.9 1704.8,182.3 1705.9,179.9 1706.9,190.6 1708.0,198.5 1709.0,194.8 1710.1,185.3 1711.1,184.4 1712.2,201.8 1713.2,185.7 1714.3,190.0 1715.3,199.5 1716.4,199.3 1717.4,189.4 1718.5,189.6 1719.5,182.2 1720.6,180.8 1721.6,197.3 1722.7,202.7 1723.7,186.3 1724.8,192.4 1725.8,194.0 1726.9,197.7 1727.9,189.8 1729.0,199.0 1730.0,195.9 1731.1,189.5 1732.1,198.5 1733.2,200.5 1734.2,188.2 1735.3,203.6 1736.3,202.3 1737.4,191.7 1738.4,193.9 1739.5,204.1 1740.5,191.9 1741.6,203.4 1742.6,188.3 1743.7,199.6 1744.7,201.4 1745.8,199.0 1746.8,208.2"/>
<rect x="1059" y="437" width="196.6" height="347.6" fill="#404040"/>
<line x1="1059" y1="437.5" x2="1747" y2="437.5" stroke="#686868" stroke-width="1"/>
<line x1="1059" y1="506.5" x2="1747" y2="506.5" stroke="#686868" stroke-width="1"/>
<line x1="1059" y1="576.5" x2="1747" y2="576.5" stroke="#686868" stroke-width="1"/>
<line x1="1059" y1="645.5" x2="1747" y2="645.5" stroke="#686868" stroke-width="1"/>
<line x1="1059" y1="715.5" x2="1747" y2="715.5" stroke="#686868" stroke-width="1"/>
<line x1="1095.5" y1="437" x2="1095.5" y2="784.5" stroke="#646464" stroke-width="1"/>
<line x1="1149.5" y1="437" x2="1149.5" y2="784.5" stroke="#646464" stroke-width="1"/>
<line x1="1202.5" y1="437" x2="1202.5" y2="784.5" stroke="#646464" stroke-width="1"/>
<line x1="1256.5" y1="437" x2="1256.5" y2="784.5" stroke="#8a8a58" stroke-width="1"/>
<line x1="1309.5" y1="437" x2="1309.5" y2="784.5" stroke="#646464" stroke-width="1"/>
<line x1="1363.5" y1="437" x2="1363.5" y2="784.5" stroke="#646464" stroke-width="1"/>
<line x1="1416.5" y1="437" x2="1416.5" y2="784.5" stroke="#646464" stroke-width="1"/>
<line x1="1469.5" y1="437" x2="1469.5" y2="784.5" stroke="#646464" stroke-width="1"/>
<line x1="1523.5" y1="437" x2="1523.5" y2="784.5" stroke="#646464" stroke-width="1"/>
<line x1="1576.5" y1="437" x2="1576.5" y2="784.5" stroke="#646464" stroke-width="1"/>
<line x1="1630.5" y1="437" x2="1630.5" y2="784.5" stroke="#646464" stroke-width="1"/>
<line x1="1683.5" y1="437" x2="1683.5" y2="784.5" stroke="#646464" stroke-width="1"/>
<line x1="1737.5" y1="437" x2="1737.5" y2="784.5" stroke="#646464" stroke-width="1"/>
<line x1="1059" y1="784.6" x2="1747" y2="784.6" stroke="#a0a0a0" stroke-width="1"/>
<line x1="1059.5" y1="437" x2="1059.5" y2="784.5" stroke="#9a3434" stroke-width="1.5"/>
<polyline fill="none" stroke="#cfcfcf" stroke-width="1" stroke-linejoin="round" points="1059.5,763.2 1060.5,780.1 1061.4,758.9 1062.4,764.1 1063.3,747.5 1064.3,784.6 1065.2,750.7 1066.2,754.3 1067.1,746.4 1068.1,743.5 1069.0,774.3 1070.0,771.1 1070.9,739.9 1071.9,767.2 1072.8,784.6 1073.8,761.9 1074.7,716.3 1075.7,784.6 1076.6,760.6 1077.6,759.9 1078.5,776.3 1079.5,784.6 1080.4,729.8 1081.4,772.8 1082.3,777.0 1083.3,748.5 1084.2,752.9 1085.2,784.6 1086.1,750.8 1087.1,762.3 1088.0,754.0 1089.0,737.3 1089.9,747.4 1090.9,784.6 1091.8,779.9 1092.8,759.0 1093.7,723.3 1094.7,784.6 1095.6,754.1 1096.6,751.5 1097.5,784.6 1098.5,775.2 1099.4,769.3 1100.4,758.9 1101.3,757.1 1102.3,774.8 1103.2,757.5 1104.2,784.6 1105.1,742.0 1106.1,784.6 1107.0,735.5 1108.0,781.6 1108.9,755.5 1109.9,732.3 1110.8,757.4 1111.8,780.6 1112.7,750.0 1113.7,732.5 1114.6,774.9 1115.6,784.6 1116.5,751.5 1117.5,751.6 1118.4,751.8 1119.4,784.6 1120.3,727.8 1121.3,775.3 1122.2,784.6 1123.2,762.4 1124.1,784.6 1125.1,760.6 1126.0,749.9 1127.0,779.7 1127.9,750.6 1128.9,745.3 1129.8,757.4 1130.8,759.0 1131.7,756.9 1132.7,771.1 1133.6,752.1 1134.6,726.7 1135.5,728.1 1136.5,784.6 1137.4,752.6 1138.4,734.6 1139.3,742.3 1140.3,738.5 1141.2,784.6 1142.2,780.8 1143.1,724.5 1144.1,742.7 1145.0,784.6 1146.0,775.9 1146.9,777.5 1147.9,755.7 1148.8,784.6 1149.8,756.9 1150.7,757.5 1151.7,777.0 1152.6,779.4 1153.6,764.1 1154.5,767.3 1155.5,762.7 1156.4,767.4 1157.4,775.1 1158.3,737.8 1159.3,752.8 1160.2,784.6 1161.2,746.4 1162.1,743.9 1163.1,768.3 1164.0,766.9 1165.0,766.3 1165.9,773.7 1166.9,733.2 1167.8,753.4 1168.8,731.6 1169.7,751.2 1170.7,755.3 1171.6,784.6 1172.6,733.7 1173.5,730.0 1174.5,780.7 1175.4,763.5 1176.4,746.0 1177.3,784.6 1178.3,748.7 1179.2,758.4 1180.2,762.5 1181.1,760.3 1182.1,721.3 1183.0,777.4 1184.0,784.6 1184.9,739.1 1185.9,762.1 1186.8,764.2 1187.8,780.9 1188.7,771.3 1189.7,784.6 1190.6,770.0 1191.6,773.5 1192.5,769.8 1193.5,784.6 1194.4,771.1 1195.4,776.7 1196.3,779.0 1197.3,760.1 1198.2,768.4 1199.2,741.2 1200.1,750.5 1201.1,784.6 1202.0,772.4 1203.0,760.4 1203.9,784.6 1204.9,755.8 1205.8,732.9 1206.8,781.5 1207.7,744.9 1208.7,741.7 1209.6,747.5 1210.6,778.0 1211.5,750.4 1212.5,784.6 1213.4,784.4 1214.4,718.4 1215.3,756.5 1216.3,771.2 1217.2,760.5 1218.2,732.4 1219.1,784.6 1220.1,755.4 1221.0,741.8 1222.0,734.9 1222.9,778.5 1223.9,748.4 1224.8,758.2 1225.8,744.3 1226.7,744.3 1227.7,741.9 1228.6,782.1 1229.6,750.8 1230.5,759.7 1231.5,756.1 1232.4,756.0 1233.4,784.6 1234.3,741.7 1235.3,750.7 1236.2,742.1 1237.2,746.7 1238.1,760.1 1239.1,751.0 1240.0,741.0 1241.0,737.5 1241.9,736.7 1242.9,753.1 1243.8,735.4 1244.8,723.4 1245.7,720.7 1246.7,741.9 1247.6,724.6 1248.6,728.6 1249.5,718.8 1250.5,721.0 1251.4,702.2 1252.4,696.4 1253.3,702.5 1253.7,696.2 1254.3,677.1 1255.2,642.7 1256.2,602.3 1256.3,595.3 1257.1,624.4 1258.1,669.1 1259.0,702.4 1260.0,712.8 1260.9,716.7 1261.9,725.5 1262.0,727.1 1262.8,754.1 1263.8,759.7 1264.7,737.5 1265.7,778.6 1266.6,761.3 1267.6,768.0 1268.5,740.3 1269.5,746.0 1270.4,761.7 1271.4,769.4 1272.3,734.0 1273.3,748.0 1274.2,735.7 1275.2,740.9 1276.1,784.6 1277.1,752.0 1278.0,784.6 1279.0,774.3 1279.9,773.9 1280.9,766.0 1281.8,760.4 1282.8,773.9 1283.7,726.2 1284.7,764.9 1285.6,782.8 1286.6,769.1 1287.5,761.1 1288.5,747.8 1289.4,778.0 1290.4,762.8 1291.3,754.7 1292.3,784.6 1293.2,744.0 1294.2,756.8 1295.1,774.8 1296.1,784.6 1297.0,784.2 1298.0,784.6 1298.9,768.7 1299.9,784.6 1300.8,771.3 1301.8,766.0 1302.7,764.5 1303.7,757.3 1304.6,772.6 1305.6,784.6 1306.5,731.1 1307.5,777.6 1308.4,760.5 1309.4,784.6 1310.3,754.0 1311.3,752.0 1312.2,784.6 1313.2,732.1 1314.1,725.1 1315.1,784.6 1316.0,770.3 1317.0,741.3 1317.9,749.0 1318.9,751.1 1319.8,731.2 1320.8,750.4 1321.7,747.7 1322.7,775.1 1323.6,748.4 1324.6,752.9 1325.5,784.6 1326.5,768.1 1327.4,767.8 1328.4,728.0 1329.3,744.2 1330.3,753.7 1331.2,758.2 1332.2,758.0 1333.1,769.0 1334.1,771.2 1335.0,764.3 1336.0,780.5 1336.9,761.8 1337.9,769.9 1338.8,732.0 1339.8,756.0 1340.7,757.9 1341.7,763.7 1342.6,728.6 1343.6,730.1 1344.5,774.0 1345.5,740.5 1346.4,744.1 1347.4,748.4 1348.3,732.2 1349.3,738.4 1350.2,755.8 1351.2,754.7 1352.1,777.8 1353.1,741.5 1354.0,737.1 1355.0,784.6 1355.9,747.6 1356.9,758.9 1357.8,762.4 1358.8,773.3 1359.7,774.4 1360.7,784.6 1361.6,749.9 1362.6,771.2 1363.5,784.6 1364.5,746.4 1365.4,764.4 1366.4,755.5 1367.3,764.2 1368.3,765.2 1369.2,784.6 1370.2,784.6 1371.1,738.7 1372.1,784.6 1373.0,765.5 1374.0,745.5 1374.9,733.4 1375.9,749.0 1376.8,770.2 1377.8,784.6 1378.7,762.5 1379.7,736.9 1380.6,757.8 1381.6,780.7 1382.5,750.0 1383.5,754.7 1384.4,737.2 1385.4,756.2 1386.3,747.4 1387.3,738.5 1388.2,766.9 1389.2,742.7 1390.1,757.2 1391.1,741.4 1392.0,784.6 1393.0,764.4 1393.9,778.3 1394.9,761.8 1395.8,754.1 1396.8,748.4 1397.7,784.6 1398.7,777.2 1399.6,751.3 1400.6,733.2 1401.5,784.6 1402.5,742.5 1403.4,778.9 1404.4,776.0 1405.3,756.2 1406.3,764.4 1407.2,763.7 1408.2,784.6 1409.1,732.7 1410.1,742.6 1411.0,778.9 1412.0,750.5 1412.9,750.7 1413.9,770.9 1414.8,784.6 1415.8,760.6 1416.7,763.7 1417.7,774.3 1418.6,784.6 1419.6,738.9 1420.5,726.7 1421.5,758.8 1422.4,746.8 1423.4,750.6 1424.3,759.1 1425.3,763.8 1426.2,763.1 1427.2,784.6 1428.1,784.6 1429.1,737.4 1430.0,771.3 1431.0,783.3 1431.9,784.6 1432.9,767.7 1433.8,784.6 1434.8,748.9 1435.7,746.5 1436.7,737.3 1437.6,779.9 1438.6,781.9 1439.5,746.9 1440.5,784.6 1441.4,756.0 1442.4,753.7 1443.3,748.2 1444.3,782.3 1445.2,749.0 1446.2,775.9 1447.1,736.4 1448.1,740.2 1449.0,720.3 1450.0,746.9 1450.9,743.1 1451.9,784.6 1452.8,746.7 1453.8,770.9 1454.7,776.6 1455.7,784.6 1456.6,773.6 1457.6,778.8 1458.5,764.1 1459.5,757.0 1460.4,747.1 1461.4,767.9 1462.3,784.6 1463.3,737.9 1464.2,744.3 1465.2,758.6 1466.1,773.9 1467.1,741.0 1468.0,784.6 1469.0,751.5 1469.9,751.7 1470.9,754.1 1471.8,740.2 1472.8,774.0 1473.7,784.6 1474.7,752.8 1475.6,758.3 1476.6,784.6 1477.5,773.6 1478.5,784.6 1479.4,762.5 1480.4,733.9 1481.3,723.6 1482.3,781.6 1483.2,756.5 1484.2,732.8 1485.1,784.6 1486.1,750.3 1487.0,778.4 1488.0,770.0 1488.9,764.0 1489.9,765.5 1490.8,763.5 1491.8,772.8 1492.7,784.6 1493.7,740.3 1494.6,733.9 1495.6,758.0 1496.5,764.0 1497.5,768.8 1498.4,752.4 1499.4,751.2 1500.3,784.6 1501.3,759.9 1502.2,763.5 1503.2,765.0 1504.1,758.2 1505.1,759.2 1506.0,740.2 1507.0,765.8 1507.9,743.6 1508.9,761.7 1509.8,784.6 1510.8,746.3 1511.7,754.2 1512.7,774.0 1513.6,737.2 1514.6,784.3 1515.5,750.0 1516.5,784.6 1517.4,783.6 1518.4,757.9 1519.3,754.7 1520.3,751.7 1521.2,718.5 1522.2,777.9 1523.1,765.3 1524.1,750.9 1525.0,784.6 1526.0,784.6 1526.9,754.7 1527.9,758.2 1528.8,740.9 1529.8,759.4 1530.7,766.3 1531.7,754.1 1532.6,732.7 1533.6,781.7 1534.5,754.6 1535.5,767.0 1536.4,755.6 1537.4,762.9 1538.3,784.6 1539.3,740.7 1540.2,784.6 1541.2,760.3 1542.1,749.4 1543.1,761.8 1544.0,761.4 1545.0,747.6 1545.9,755.0 1546.9,759.6 1547.8,759.1 1548.8,759.9 1549.7,774.0 1550.7,759.4 1551.6,784.6 1552.6,772.0 1553.5,744.1 1554.5,751.4 1555.4,784.6 1556.4,744.8 1557.3,753.5 1558.3,755.6 1559.2,784.6 1560.2,784.6 1561.1,776.4 1562.1,749.2 1563.0,783.0 1564.0,733.3 1564.9,775.7 1565.9,771.0 1566.8,760.4 1567.8,772.8 1568.7,749.9 1569.7,756.0 1570.6,784.6 1571.6,760.4 1572.5,777.5 1573.5,751.8 1574.4,774.5 1575.4,784.6 1576.3,784.6 1577.3,745.3 1578.2,762.8 1579.2,784.6 1580.1,752.3 1581.1,755.4 1582.0,740.7 1583.0,776.8 1583.9,784.2 1584.9,743.3 1585.8,769.9 1586.8,760.1 1587.7,755.2 1588.7,784.6 1589.6,781.0 1590.6,736.6 1591.5,784.6 1592.5,738.2 1593.4,783.7 1594.4,761.7 1595.3,772.3 1596.3,780.4 1597.2,771.3 1598.2,733.3 1599.1,778.0 1600.1,754.9 1601.0,777.0 1602.0,746.4 1602.9,784.6 1603.9,756.2 1604.8,775.0 1605.8,760.8 1606.7,776.4 1607.7,784.6 1608.6,784.6 1609.6,766.7 1610.5,784.6 1611.5,755.5 1612.4,753.7 1613.4,779.8 1614.3,744.9 1615.3,762.8 1616.2,772.0 1617.2,784.6 1618.1,748.1 1619.1,726.4 1620.0,778.3 1621.0,763.1 1621.9,744.3 1622.9,729.5 1623.8,753.1 1624.8,784.6 1625.7,751.8 1626.7,783.5 1627.6,772.8 1628.6,764.3 1629.5,745.6 1630.5,755.1 1631.4,776.7 1632.4,768.0 1633.3,784.6 1634.3,772.3 1635.2,722.7 1636.2,748.7 1637.1,754.4 1638.1,757.6 1639.0,784.6 1640.0,784.6 1640.9,768.9 1641.9,762.1 1642.8,762.5 1643.8,767.1 1644.7,777.1 1645.7,743.5 1646.6,784.6 1647.6,752.6 1648.5,773.4 1649.5,767.1 1650.4,756.6 1651.4,773.6 1652.3,753.4 1653.3,784.6 1654.2,740.7 1655.2,774.3 1656.1,784.6 1657.1,770.1 1658.0,751.1 1659.0,784.6 1659.9,762.6 1660.9,767.6 1661.8,784.6 1662.8,750.6 1663.7,751.1 1664.7,734.3 1665.6,721.2 1666.6,744.2 1667.5,760.7 1668.5,749.9 1669.4,728.9 1670.4,763.0 1671.3,751.7 1672.3,736.1 1673.2,754.3 1674.2,784.6 1675.1,784.6 1676.1,736.0 1677.0,779.2 1678.0,775.8 1678.9,778.0 1679.9,784.6 1680.8,765.4 1681.8,764.9 1682.7,749.7 1683.7,757.0 1684.6,784.6 1685.6,782.1 1686.5,750.5 1687.5,784.6 1688.4,784.6 1689.4,782.3 1690.3,748.6 1691.3,784.6 1692.2,784.6 1693.2,781.7 1694.1,751.8 1695.1,747.6 1696.0,748.5 1697.0,761.6 1697.9,742.3 1698.9,784.6 1699.8,760.3 1700.8,784.6 1701.7,749.9 1702.7,737.8 1703.6,774.2 1704.6,757.6 1705.5,761.5 1706.5,769.3 1707.4,747.5 1708.4,784.6 1709.3,758.0 1710.3,764.2 1711.2,746.0 1712.2,784.6 1713.1,766.3 1714.1,782.8 1715.0,770.3 1716.0,748.5 1716.9,748.4 1717.9,777.2 1718.8,784.6 1719.8,758.6 1720.7,784.6 1721.7,757.3 1722.6,784.6 1723.6,755.3 1724.5,752.1 1725.5,762.2 1726.4,757.4 1727.4,742.8 1728.3,784.6 1729.3,771.7 1730.2,751.7 1731.2,743.5 1732.1,747.1 1733.1,754.4 1734.0,765.8 1735.0,744.5 1735.9,762.8 1736.9,762.3 1737.8,784.6 1738.8,763.6 1739.7,760.2 1740.7,741.1 1741.6,784.6 1742.6,745.5 1743.5,763.5 1744.5,737.3 1745.4,759.6 1746.4,757.6"/>
<circle cx="1256.3" cy="597.2" r="4.3" fill="#ffee00"/>
</svg>
<div class="a" style="left:-328.0px;width:1000px;text-align:right;top:-8.5px;font-size:13.2px;color:#f0f0f0;">20.0</div>
<div class="a" style="left:-328.0px;width:1000px;text-align:right;top:63.5px;font-size:13.2px;color:#f0f0f0;">0.0</div>
<div class="a" style="left:-328.0px;width:1000px;text-align:right;top:135.5px;font-size:13.2px;color:#f0f0f0;">-20.0</div>
<div class="a" style="left:-328.0px;width:1000px;text-align:right;top:207.5px;font-size:13.2px;color:#f0f0f0;">-40.0</div>
<div class="a" style="left:-328.0px;width:1000px;text-align:right;top:279.5px;font-size:13.2px;color:#f0f0f0;">-60.0</div>
<div class="a" style="left:242.5px;width:1000px;text-align:center;top:292.9px;font-size:12.5px;color:#f0f0f0;">174</div>
<div class="a" style="left:354.5px;width:1000px;text-align:center;top:292.9px;font-size:12.5px;color:#f0f0f0;">174.2</div>
<div class="a" style="left:466.5px;width:1000px;text-align:center;top:292.9px;font-size:12.5px;color:#f0f0f0;">174.4</div>
<div class="a" style="left:578.6px;width:1000px;text-align:center;top:292.9px;font-size:12.5px;color:#f0f0f0;">174.6</div>
<div class="a" style="left:690.6px;width:1000px;text-align:center;top:292.9px;font-size:12.5px;color:#f0f0f0;">174.8</div>
<div class="a" style="left:802.6px;width:1000px;text-align:center;top:292.9px;font-size:12.5px;color:#f0f0f0;">175</div>
<div class="a" style="left:914.6px;width:1000px;text-align:center;top:292.9px;font-size:12.5px;color:#f0f0f0;">175.2</div>
<div class="a" style="left:1026.6px;width:1000px;text-align:center;top:292.9px;font-size:12.5px;color:#f0f0f0;">175.4</div>
<div class="a" style="left:1138.7px;width:1000px;text-align:center;top:292.9px;font-size:12.5px;color:#f0f0f0;">175.6</div>
<div class="a" style="left:1250.7px;width:1000px;text-align:center;top:292.9px;font-size:12.5px;color:#f0f0f0;">175.8</div>
<div class="a" style="left:762.0px;width:1000px;text-align:center;top:314.3px;font-size:16px;color:#f0f0f0;">Frequency (MHz)</div>
<div class="a" style="left:607.9px;top:106.6px;font-size:16px;transform:translate(-50%,-50%) rotate(-90deg);color:#f0f0f0">Magnitude (dB)</div>
<div class="a" style="left:46.0px;width:1000px;text-align:right;top:430.5px;font-size:13.2px;color:#f0f0f0;">-20.0</div>
<div class="a" style="left:46.0px;width:1000px;text-align:right;top:500.0px;font-size:13.2px;color:#f0f0f0;">-30.0</div>
<div class="a" style="left:46.0px;width:1000px;text-align:right;top:569.6px;font-size:13.2px;color:#f0f0f0;">-40.0</div>
<div class="a" style="left:46.0px;width:1000px;text-align:right;top:639.1px;font-size:13.2px;color:#f0f0f0;">-50.0</div>
<div class="a" style="left:46.0px;width:1000px;text-align:right;top:708.6px;font-size:13.2px;color:#f0f0f0;">-60.0</div>
<div class="a" style="left:46.0px;width:1000px;text-align:right;top:778.1px;font-size:13.2px;color:#f0f0f0;">-70.0</div>
<div class="a" style="left:595.2px;width:1000px;text-align:center;top:792.2px;font-size:12.8px;color:#f0f0f0;">-60</div>
<div class="a" style="left:648.7px;width:1000px;text-align:center;top:792.2px;font-size:12.8px;color:#f0f0f0;">-40</div>
<div class="a" style="left:702.1px;width:1000px;text-align:center;top:792.2px;font-size:12.8px;color:#f0f0f0;">-20</div>
<div class="a" style="left:755.6px;width:1000px;text-align:center;top:792.2px;font-size:12.8px;color:#f0f0f0;">0</div>
<div class="a" style="left:809.0px;width:1000px;text-align:center;top:792.2px;font-size:12.8px;color:#f0f0f0;">20</div>
<div class="a" style="left:862.5px;width:1000px;text-align:center;top:792.2px;font-size:12.8px;color:#f0f0f0;">40</div>
<div class="a" style="left:915.9px;width:1000px;text-align:center;top:792.2px;font-size:12.8px;color:#f0f0f0;">60</div>
<div class="a" style="left:969.4px;width:1000px;text-align:center;top:792.2px;font-size:12.8px;color:#f0f0f0;">80</div>
<div class="a" style="left:1022.8px;width:1000px;text-align:center;top:792.2px;font-size:12.8px;color:#f0f0f0;">100</div>
<div class="a" style="left:1076.3px;width:1000px;text-align:center;top:792.2px;font-size:12.8px;color:#f0f0f0;">120</div>
<div class="a" style="left:1129.8px;width:1000px;text-align:center;top:792.2px;font-size:12.8px;color:#f0f0f0;">140</div>
<div class="a" style="left:1183.2px;width:1000px;text-align:center;top:792.2px;font-size:12.8px;color:#f0f0f0;">160</div>
<div class="a" style="left:1236.6px;width:1000px;text-align:center;top:792.2px;font-size:12.8px;color:#f0f0f0;">180</div>
<div class="a" style="left:959.0px;width:1000px;text-align:center;top:812.8px;font-size:13.6px;color:#f0f0f0;">Distance Difference (km)</div>
<div class="a" style="left:989.7px;top:610.5px;font-size:13.6px;transform:translate(-50%,-50%) rotate(-90deg);color:#f0f0f0">Magnitude (dB)</div>
</body></html>
